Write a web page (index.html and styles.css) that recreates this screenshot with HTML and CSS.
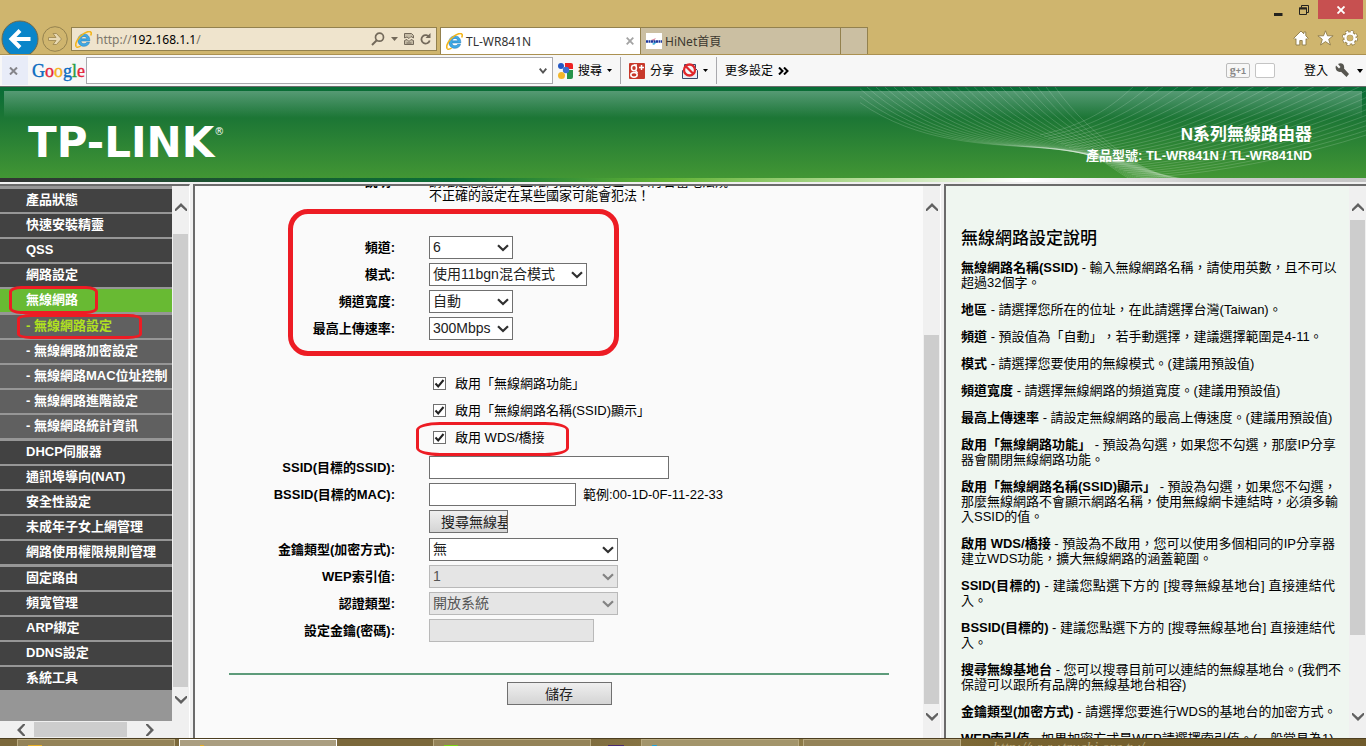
FILE: index.html
```html
<!DOCTYPE html>
<html lang="zh-Hant">
<head>
<meta charset="utf-8">
<title>TL-WR841N</title>
<link rel="stylesheet" href="styles.css">
</head>
<body>
<svg class="defs" aria-hidden="true">
  <symbol id="ie" viewBox="0 0 16 16">
    <path d="M13.9 9.4H5.6c.1 1.6 1.300 2.600 2.900 2.600 1.200 0 2-.5 2.500-1.300h2.700C12.900 13 11 14.400 8.500 14.400 5.200 14.400 2.700 12 2.700 8.600 2.700 5.200 5.200 2.800 8.500 2.800c3.400 0 5.600 2.600 5.400 6.600zM5.700 7.400h5.500C11.100 6 10 5.100 8.500 5.100S5.900 6 5.700 7.400z" fill="#3fa9e4" stroke="#1b78bd" stroke-width=".5"/>
    <path d="M1.300 14.900C-.8 12.500 3 5.400 8.600 2.200c3-1.700 5.800-2 6.500-.9.400.7.200 1.700-.3 2.900" fill="none" stroke="#f3b51b" stroke-width="1.500"/>
    <path d="M1.300 14.900c.9.700 2.500.2 4-.6" fill="none" stroke="#f3b51b" stroke-width="1.300"/>
  </symbol>
  <symbol id="up" viewBox="0 0 12 8"><path d="M0 8V6l6-6 6 6v2l-1 0-5-4.500L1 8z" fill="#606060"/></symbol>
  <symbol id="down" viewBox="0 0 12 8"><path d="M0 0v2l6 6 6-6V0h-1L6 4.500 1 0z" fill="#606060"/></symbol>
  <symbol id="left" viewBox="0 0 8 12"><path d="M8 0H6L0 6l6 6h2v-1L3.500 6 8 1z" fill="#606060"/></symbol>
  <symbol id="right" viewBox="0 0 8 12"><path d="M0 0h2l6 6-6 6H0v-1L4.500 6 0 1z" fill="#606060"/></symbol>
</svg>

<header class="chrome">
  <div class="nav">
    <button class="back" aria-label="上一頁"><svg viewBox="0 0 38 38" width="38" height="38"><circle cx="19" cy="19" r="18" fill="#0985c9" stroke="#6f6a4c"/><path d="M29.500 19H11.500M19 10.500 10.500 19l8.500 8.500" fill="none" stroke="#fff" stroke-width="4"/></svg></button>
    <button class="forward" aria-label="下一頁"><svg viewBox="0 0 26 26" width="26" height="26"><circle cx="13" cy="13" r="12.300" fill="none" stroke="#94824f"/><path d="M6.500 11.500H14l-3-4h3.500l5 5.500-5 5.500H11l3-4H6.500z" fill="#e8d9b3" stroke="#a08b54" stroke-width=".9"/></svg></button>
    <div class="address">
      <svg width="17" height="17"><use href="#ie"/></svg>
      <span class="url">http://<b>192.168.1.1</b>/</span>
      <span class="address-icons">
        <svg width="14" height="14" viewBox="0 0 14 14"><circle cx="8.500" cy="5.200" r="4" fill="none" stroke="#73695a" stroke-width="1.700"/><path d="M5.500 8.500 1 13" stroke="#73695a" stroke-width="2"/></svg>
        <svg width="7" height="4" viewBox="0 0 7 4"><path d="M0 0h7L3.500 4z" fill="#73695a"/></svg>
        <svg width="10" height="12" viewBox="0 0 10 12"><path d="M.5 5V.5h7l2 2V5L7 3.500 5 5.500 3 4zM.5 11.500V7.500L3 6.500l2 2 2-2 2.500 1v4z" fill="#c5bba5" stroke="#73695a"/><path d="M2.500 10h5" stroke="#73695a"/></svg>
        <svg width="11" height="12" viewBox="0 0 11 12"><path d="M9.300 4.300A4.200 4.200 0 1 0 9.700 7.500" fill="none" stroke="#73695a" stroke-width="1.800"/><path d="M10.500 0v5H5.500z" fill="#73695a"/></svg>
      </span>
    </div>
    <div class="tabs">
      <div class="tab tab-active"><svg width="17" height="17"><use href="#ie"/></svg><span>TL-WR841N</span><button class="tab-close" aria-label="關閉"><svg width="8" height="8" viewBox="0 0 8 8"><path d="m.7.700 6.600 6.600M7.300.700.700 7.300" stroke="#a3a3a3" stroke-width="1.800"/></svg></button></div>
      <div class="tab"><svg width="16" height="16" viewBox="0 0 16 16"><path fill="#fff" d="M0 0h16v16H0z"/><path d="m5 7 5-2-2 3z" fill="#d98ba0"/><path d="m6 11 4-3h2l-4 4z" fill="#43b9dd"/><path d="M0 8.500h16" stroke="#1c389e" stroke-width="2.500" stroke-dasharray="2 .5"/></svg><span>HiNet首頁</span></div>
      <button class="tab-new" aria-label="新索引標籤"></button>
    </div>
    <div class="window">
      <div class="controls">
        <svg width="9" height="12" viewBox="0 0 9 12"><path d="M0 10.500h8.500" stroke="#24231f" stroke-width="3"/></svg>
        <svg width="10" height="10" viewBox="0 0 10 10"><path d="M2.500 2.500V.500h7v7h-2M.500 3h7v6.500h-7z" fill="none" stroke="#24231f"/><path d="M0 3.500h8" stroke="#24231f" stroke-width="2"/></svg>
        <button class="close" aria-label="關閉視窗"><svg width="8" height="8" viewBox="0 0 8 8"><path d="m.5.500 7 7M7.500.500l-7 7" stroke="#fff" stroke-width="1.900"/></svg></button>
      </div>
      <div class="tools">
        <svg width="16" height="16" viewBox="0 0 16 16"><path d="M8 1 .8 8.200 2 9.500l1-.8V15h3.800v-4.500h2.400V15H13V8.700l1 .8 1.200-1.300L12.800 5.800V2h-2v1.800z" fill="#fff" stroke="#8d7a48" stroke-width=".9"/></svg>
        <svg width="17" height="16" viewBox="0 0 17 16"><path d="m8.500.800 2 5h5.600l-4.400 3.500 1.700 5.700-4.900-3.400L3.600 15l1.700-5.700L.900 5.800h5.600z" fill="#fff" stroke="#8d7a48" stroke-width=".9"/></svg>
        <svg width="16" height="16" viewBox="0 0 16 16"><g fill="none" stroke="#8d7a48"><circle cx="8" cy="8" r="4.800" stroke-width="3.600"/><circle cx="8" cy="8" r="6.500" stroke-width="3" stroke-dasharray="3 2.105"/></g><g fill="none" stroke="#fff"><circle cx="8" cy="8" r="4.500" stroke-width="2.400"/><circle cx="8" cy="8" r="6.300" stroke-width="2" stroke-dasharray="2.400 2.550"/></g></svg>
      </div>
    </div>
  </div>

  <div class="toolbar">
    <button class="toolbar-close" aria-label="關閉工具列"><svg width="9" height="8" viewBox="0 0 9 8"><path d="m1 .500 7 7M8 .500l-7 7" stroke="#85858a" stroke-width="2"/></svg></button>
    <span class="google"><i class="g-blue">G</i><i class="g-red">o</i><i class="g-yellow">o</i><i class="g-blue">g</i><i class="g-green">l</i><i class="g-red">e</i></span>
    <div class="searchbox"><input type="text" aria-label="搜尋"><svg width="8" height="6" viewBox="0 0 8 6"><path d="m.7.700 3.300 3.800L7.300.700" fill="none" stroke="#555" stroke-width="1.900"/></svg></div>
    <button class="tool"><svg width="16" height="16" viewBox="0 0 16 16"><path d="M8 0h6q2 0 2 2v4H8z" fill="#e22"/><path d="M10 7h6v7q0 2-2 2h-4z" fill="#26934a"/><path d="M6 6h4v10H8z" fill="#f7f7f7"/><circle cx="4" cy="3" r="3" fill="#2357c5"/><circle cx="9" cy="7" r="3.200" fill="#3b6fd2"/><circle cx="4.500" cy="12.500" r="3.500" fill="#f3b72b"/></svg>搜尋<svg width="5" height="3" viewBox="0 0 5 3"><path d="M0 0h5L2.500 3z"/></svg></button>
    <span class="separator"></span>
    <button class="tool"><svg width="16" height="16" viewBox="0 0 16 16"><rect width="16" height="16" rx="1" fill="#c8392b"/><g fill="none" stroke="#fff" stroke-width="1.500"><ellipse cx="5" cy="5" rx="2.500" ry="2.700"/><path d="M8 2H5M6.500 7.500 8.500 10"/><ellipse cx="5" cy="11.800" rx="3.200" ry="2.400"/><path d="M10 4.500h5M12.500 2v5"/></g></svg>分享</button>
    <button class="tool" aria-label="封鎖"><svg width="16" height="16" viewBox="0 0 16 16"><path d="M2.500 1.500h11v4l2 2v8h-15v-8l2-2z" fill="#e7eef7" stroke="#39476a"/><circle cx="7.500" cy="7" r="5.500" fill="#fff" fill-opacity=".5" stroke="#e0272c" stroke-width="2.300"/><path d="m3.500 3 8 8" stroke="#e0272c" stroke-width="2.300"/></svg><svg width="5" height="3" viewBox="0 0 5 3"><path d="M0 0h5L2.500 3z"/></svg></button>
    <span class="separator"></span>
    <button class="tool">更多設定<svg width="11" height="8" viewBox="0 0 11 8"><path d="m1 .500 3.500 3.500L1 7.500M6 .500 9.500 4 6 7.500" fill="none" stroke="#000" stroke-width="2"/></svg></button>
    <div class="account">
      <button class="plus-one">g<small>+1</small></button><span class="bubble"></span>
      <a href="#">登入</a>
      <svg width="15" height="15" viewBox="0 0 15 15"><path d="M1 2.500 4 5.500 5.500 4 3 1c4-2 7 1 6 4.500l5 5.500-2.500 3L6 8.800C2.500 9.800-.5 6.500 1 2.500z" fill="#575650"/></svg>
      <svg width="6" height="4" viewBox="0 0 6 4"><path d="M0 0h6L3 4z"/></svg>
    </div>
  </div>
</header>

<section class="banner">
  <div class="gloss"></div>
  <svg class="waves" id="waves" viewBox="0 0 506 91" aria-hidden="true"></svg>
  <div class="brand">TP-LINK<sup>®</sup></div>
  <div class="product"><h1>N系列無線路由器</h1><p>產品型號: TL-WR841N / TL-WR841ND</p></div>
</section>
<div class="rainbow"></div>

<main class="frames">
  <aside class="frame frame-menu">
    <nav class="menu">
      <a href="#">產品狀態</a>
      <a href="#">快速安裝精靈</a>
      <a href="#">QSS</a>
      <a href="#">網路設定</a>
      <a href="#" class="open">無線網路<span class="mark mark-menu"></span></a>
      <a href="#" class="sub current">- 無線網路設定<span class="mark mark-sub"></span></a>
      <a href="#" class="sub">- 無線網路加密設定</a>
      <a href="#" class="sub">- 無線網路MAC位址控制</a>
      <a href="#" class="sub">- 無線網路進階設定</a>
      <a href="#" class="sub">- 無線網路統計資訊</a>
      <a href="#">DHCP伺服器</a>
      <a href="#">通訊埠導向(NAT)</a>
      <a href="#">安全性設定</a>
      <a href="#">未成年子女上網管理</a>
      <a href="#">網路使用權限規則管理</a>
      <a href="#">固定路由</a>
      <a href="#">頻寬管理</a>
      <a href="#">ARP綁定</a>
      <a href="#">DDNS設定</a>
      <a href="#">系統工具</a>
    </nav>
    <div class="scroll"><svg width="12" height="8"><use href="#up"/></svg><div class="track track-menu"><i></i></div><svg width="12" height="8"><use href="#down"/></svg></div>
    <div class="scroll-x"><svg width="8" height="12"><use href="#left"/></svg><i></i><svg width="8" height="12"><use href="#right"/></svg></div>
  </aside>

  <section class="frame frame-form">
    <form class="form">
      <div class="row notice"><span class="name">說明:</span><p>請確定您選擇了正確的國家或地區，以符合當地法規<br>不正確的設定在某些國家可能會犯法！</p></div>
      <div class="group radio-settings">
        <div class="row"><label for="channel">頻道:</label><select id="channel" class="short"><option>6</option></select></div>
        <div class="row"><label for="mode">模式:</label><select id="mode" class="medium"><option>使用11bgn混合模式</option></select></div>
        <div class="row"><label for="width">頻道寬度:</label><select id="width" class="short"><option>自動</option></select></div>
        <div class="row"><label for="rate">最高上傳速率:</label><select id="rate" class="short"><option>300Mbps</option></select></div>
        <span class="mark mark-radio"></span>
      </div>
      <div class="group options">
        <div class="option"><input type="checkbox" id="radio" checked><label for="radio">啟用「無線網路功能」</label></div>
        <div class="option"><input type="checkbox" id="broadcast" checked><label for="broadcast">啟用「無線網路名稱(SSID)顯示」</label></div>
        <div class="option"><input type="checkbox" id="wds" checked><label for="wds">啟用 WDS/橋接</label><span class="mark mark-wds"></span></div>
      </div>
      <div class="group bridge">
        <div class="row"><label for="ssid">SSID(目標的SSID):</label><input type="text" id="ssid" class="ssid"></div>
        <div class="row"><label for="bssid">BSSID(目標的MAC):</label><div class="with-hint"><input type="text" id="bssid" class="bssid"><span>範例:00-1D-0F-11-22-33</span></div></div>
        <div class="row"><span></span><button type="button" class="button survey">搜尋無線基地台</button></div>
      </div>
      <div class="group security">
        <div class="row"><label for="keytype">金鑰類型(加密方式):</label><select id="keytype" class="long"><option>無</option></select></div>
        <div class="row"><label for="wep">WEP索引值:</label><select id="wep" class="long" disabled><option>1</option></select></div>
        <div class="row"><label for="auth">認證類型:</label><select id="auth" class="long" disabled><option>開放系統</option></select></div>
        <div class="row"><label for="key">設定金鑰(密碼):</label><input type="text" id="key" class="key" disabled></div>
      </div>
      <div class="actions"><button type="button" class="button save">儲存</button></div>
    </form>
    <div class="scroll"><svg width="12" height="8"><use href="#up"/></svg><div class="track track-form"><i></i></div><svg width="12" height="8"><use href="#down"/></svg></div>
  </section>

  <aside class="frame frame-help">
    <article class="help">
      <h2>無線網路設定說明</h2>
      <p><span class="full"><b>無線網路名稱(SSID)</b> - 輸入無線網路名稱，請使用英數，且不可以</span>超過32個字。</p>
      <p><b>地區</b> - 請選擇您所在的位址，在此請選擇台灣(Taiwan)。</p>
      <p><b>頻道</b> - 預設值為「自動」，若手動選擇，建議選擇範圍是4-11。</p>
      <p><b>模式</b> - 請選擇您要使用的無線模式。(建議用預設值)</p>
      <p><b>頻道寬度</b> - 請選擇無線網路的頻道寬度。(建議用預設值)</p>
      <p><b>最高上傳速率</b> - 請設定無線網路的最高上傳速度。(建議用預設值)</p>
      <p><span class="full"><b>啟用「無線網路功能」</b> - 預設為勾選，如果您不勾選，那麼IP分享</span>器會關閉無線網路功能。</p>
      <p><span class="full"><b>啟用「無線網路名稱(SSID)顯示」</b> - 預設為勾選，如果您不勾選，</span><span class="full">那麼無線網路不會顯示網路名稱，使用無線網卡連結時，必須多輸</span>入SSID的值。</p>
      <p><span class="full"><b>啟用 WDS/橋接</b> - 預設為不啟用，您可以使用多個相同的IP分享器</span>建立WDS功能，擴大無線網路的涵蓋範圍。</p>
      <p><span class="full"><b>SSID(目標的)</b> - 建議您點選下方的 [搜尋無線基地台] 直接連結代</span>入。</p>
      <p><span class="full"><b>BSSID(目標的)</b> - 建議您點選下方的 [搜尋無線基地台] 直接連結代</span>入。</p>
      <p><span class="full"><b>搜尋無線基地台</b> - 您可以搜尋目前可以連結的無線基地台。(我們不</span>保證可以跟所有品牌的無線基地台相容)</p>
      <p><b>金鑰類型(加密方式)</b> - 請選擇您要進行WDS的基地台的加密方式。</p>
      <p><b>WEP索引值</b> - 如果加密方式是WEP請選擇索引值。(一般常見為1)</p>
    </article>
    <div class="scroll"><svg width="12" height="8"><use href="#up"/></svg><div class="track track-help"><i></i></div><svg width="12" height="8"><use href="#down"/></svg></div>
  </aside>
</main>

<footer class="taskbar">
  <span class="task task-folder"></span>
  <span class="task task-active"></span>
  <span class="gap"></span>
  <span class="task task-green"></span>
  <span class="tray"></span>
  <span class="task task-blue"></span>
  <span class="task"></span>
  <span class="wallpaper">http://www.tzuchi.org.tw/</span>
</footer>
<script src="waves.js"></script>
</body>
</html>
```
FILE: styles.css
```css
* { box-sizing: border-box; }
html { height: 100%; }
body {
  margin: 0;
  height: 100vh;
  display: flex;
  flex-direction: column;
  overflow: hidden;
  background: #f0f0f0;
  color: #000;
  font: 13px/15px "Liberation Sans", "Noto Sans CJK TC", sans-serif;
  text-spacing-trim: space-all;
}
h1, h2, p { margin: 0; }
svg { display: block; flex: none; }
button, input, select { font: inherit; color: inherit; margin: 0; padding: 0; border-radius: 0; }
button { background: none; border: 0; }
a { color: inherit; text-decoration: none; }
.defs { position: absolute; width: 0; height: 0; }

/* browser frame */
.chrome { flex: none; font-family: "Noto Sans", "Noto Sans CJK TC", sans-serif; font-size: 12px; }
.nav {
  height: 55px;
  display: flex;
  align-items: flex-end;
  background: #cfb56e;
  border-bottom: 1px solid #ab9151;
  overflow: hidden;
}
.back { height: 34px; margin-left: 1px; overflow: hidden; }
.forward { margin: 0 3px 2px; }
.address {
  flex: 0 1 366px;
  height: 24px;
  margin: 0 3px 3px 0;
  padding: 0 5px 0 3px;
  display: flex;
  align-items: center;
  gap: 4px;
  background: #efe4cd;
  border: 1px solid #93814e;
}
.url { color: #7d776a; }
.url b { color: #000; font-weight: normal; }
.address-icons { margin-left: auto; display: flex; align-items: center; gap: 6px; }
.tabs { display: flex; height: 27px; border: 1px solid #93814e; border-bottom: 0; }
.tab {
  width: 200px;
  padding: 0 6px 0 5px;
  display: flex;
  align-items: center;
  gap: 3px;
  background: #cbbfa2;
  border-right: 1px solid #93814e;
  color: #3c382f;
}
.tab-active { background: #fff; color: #333; }
.tab-close { margin-left: auto; }
.tab-new { width: 26px; background: #cbbfa2; }
.window { margin-left: auto; align-self: stretch; display: flex; flex-direction: column; justify-content: space-between; }
.controls { display: flex; align-items: center; gap: 16px; padding-right: 3px; }
.controls svg + svg { margin-right: -7px; }
.close { width: 45px; height: 19px; background: #c75050; display: grid; place-items: center; }
.tools { display: flex; justify-content: flex-end; gap: 8px; padding: 0 8px 8px 0; }

.toolbar {
  height: 32px;
  display: flex;
  align-items: center;
  background: #f7f7f7;
  border-bottom: 1px solid #6b6b6b;
}
.toolbar-close { width: 26px; height: 29px; margin-left: 2px; padding-right: 3px; background: #e8ecf8; display: grid; place-items: center; }
.google { width: 58px; padding-left: 4px; font: 18px/24px "Liberation Serif", serif; }
.google i { font-style: normal; -webkit-text-stroke: 1px currentColor; -webkit-text-stroke-width: thin; }
.g-blue { color: #0b6cc0; }
.g-red { color: #e4263c; }
.g-yellow { color: #f5b21b; }
.g-green { color: #2a9e3f; }
.searchbox { flex: 0 1 467px; height: 27px; display: flex; align-items: center; padding-right: 5px; background: #fff; border: 1px solid #a9a9ad; }
.searchbox input { flex: 1; min-width: 0; height: 100%; border: 0; outline: 0; background: none; }
.tool { display: flex; align-items: center; gap: 5px; padding: 0 4px; white-space: nowrap; }
.separator { width: 1px; height: 27px; margin: 0 4px; background: #a9a9ad; }
.account { margin-left: auto; display: flex; align-items: center; gap: 7px; padding-right: 3px; }
.plus-one { width: 24px; height: 15px; border: 1px solid #bbb; border-radius: 2px; color: #888; font: bold 12px/12px "Liberation Serif", serif; }
.plus-one small { font: bold 9px/12px "Liberation Sans", sans-serif; }
.bubble { width: 20px; height: 15px; margin: 0 22px 0 -2px; border: 1px solid #c4c4c4; border-radius: 2px; background: #fff; }

/* router banner */
.banner {
  flex: none;
  height: 91px;
  position: relative;
  display: flex;
  align-items: center;
  justify-content: space-between;
  padding: 21px 54px 0 28px;
  background: linear-gradient(#086c36, #1c7635 34%, #429634);
  color: #fff;
}
.gloss { position: absolute; inset: 4px 4px auto; height: 27px; background: linear-gradient(rgba(255,255,255,.31), rgba(255,255,255,0)); }
.waves { position: absolute; right: 0; top: 0; width: 506px; height: 91px; fill: none; stroke: #fff; stroke-opacity: .16; }
.brand { position: relative; font: bold 42px/40px "DejaVu Sans", sans-serif; }
.brand sup { font: 10px/10px "DejaVu Sans", sans-serif; vertical-align: 22px; }
.product { position: relative; text-align: right; font-weight: bold; }
.product h1 { font-size: 17px; line-height: 24px; }
.product p { line-height: 17px; }
.rainbow { flex: none; height: 4px; background: linear-gradient(90deg, #333, #155a30 20%, #0b6e37 33%, #62b336 49%, #b5dc98 63%, #fff 75%, #ccc 88%, #c6c6c6); }

/* frameset */
.frames {
  flex: 1;
  min-height: 0;
  padding-top: 2px;
  display: grid;
  grid-template: minmax(0, 1fr) / 190px minmax(0, 1fr) 422px;
  gap: 3px;
}
.frame {
  min-width: 0;
  display: grid;
  grid-template: minmax(0, 1fr) / minmax(0, 1fr) 17px;
  border-top: 2px solid #6b6b6b;
  background: #fafafa;
}
.frame-form, .frame-help { border-left: 2px solid #6b6b6b; }
.frame-form { border-right: 1px solid #fff; overflow: hidden; }
.frame-menu { border-right: 1px solid #fff; grid-template-rows: minmax(0, 1fr) 17px; background: #f0f0f0; }
.frame-help { background: #eff6f0; }

.scroll { display: flex; flex-direction: column; align-items: center; padding: 17px 0; gap: 4px; background: #f0f0f0; }
.track { flex: 1; width: 15px; display: grid; }
.track i, .scroll-x i { background: #cdcdcd; }
.track i { grid-row: 2; }
.track-menu { grid-template-rows: 19fr 453fr 5fr; }
.track-form { grid-template-rows: 120fr 369fr 5fr; }
.track-help { grid-template-rows: 5fr 415fr 74fr; }
.scroll-x { display: flex; align-items: center; padding-left: 17px; gap: 9px; }
.scroll-x i { width: 93px; height: 15px; }
.scroll-x svg + i + svg { margin-left: 10px; }

.menu { padding-top: 3px; background: #969696; display: flex; flex-direction: column; gap: 2px; }
.menu a { position: relative; height: 23px; padding-left: 26px; background: #424242; color: #fff; font-weight: bold; line-height: 21px; white-space: nowrap; }
.menu a:nth-child(5n+6) { margin-top: 1px; }
.menu .sub { background: #606060; }
.menu .open { background: #68ba33; }
.menu .current { color: #b0e020; }

/* hand-drawn highlights */
.mark { position: absolute; border: 3px solid #ed1c24; pointer-events: none; }
.mark-menu { left: 9px; top: -3px; width: 89px; height: 28px; border-radius: 12px / 6px; z-index: 1; }
.mark-sub { left: 17px; top: -1px; width: 125px; height: 25px; border-radius: 14px / 5px; z-index: 1; }
.mark-radio { left: 59px; top: -27px; width: 331px; height: 147px; border-width: 5px; border-radius: 20px; }
.mark-wds { left: 187px; top: -4px; width: 153px; height: 34px; border-radius: 24px / 8px; }

/* wireless form */
.form { width: 660px; margin: -11px auto 0; }
.frame-form > .form { clip-path: inset(11px -40px 0); }
.row { display: grid; grid-template-columns: 166px 1fr; column-gap: 34px; align-items: center; justify-items: start; }
.row > label, .name { justify-self: end; font-weight: bold; white-space: nowrap; }
.notice { align-items: start; line-height: 14px; }
.group { position: relative; display: grid; grid-auto-rows: 23px; row-gap: 4px; }
.radio-settings { margin-top: 33px; }
.options { margin-top: 32px; }
.bridge { margin-top: 7px; }
.security { margin-top: 5px; }
.option { position: relative; display: flex; align-items: center; gap: 9px; padding-left: 204px; }
.form input[type="checkbox"] {
  appearance: none;
  width: 13px;
  height: 13px;
  border: 1px solid #707070;
  background: #fff url("data:image/svg+xml,%3Csvg xmlns='http://www.w3.org/2000/svg' viewBox='0 0 11 11'%3E%3Cpath d='M1.500 5.500 4.200 8.500 9.500 2' fill='none' stroke='%23222' stroke-width='2'/%3E%3C/svg%3E") center / 11px no-repeat;
}
.form input[type="text"], .form select { height: 23px; border: 1px solid #707070; background-color: #fff; }
.form select {
  appearance: none;
  padding: 0 24px 0 3px;
  color: #222;
  font-size: 14px;
  background-image: url("data:image/svg+xml,%3Csvg xmlns='http://www.w3.org/2000/svg' viewBox='0 0 12 8'%3E%3Cpath d='M1 1.200 6 6 11 1.200' fill='none' stroke='%23303030' stroke-width='2.200'/%3E%3C/svg%3E");
  background-repeat: no-repeat;
  background-position: right 3px center;
  background-size: 12px 8px;
}
.form .short { width: 84px; padding-right: 0; }
.form .medium { width: 158px; }
.form .long { width: 189px; }
.form .ssid { width: 240px; }
.form .bssid { width: 147px; }
.form .key { width: 165px; }
.form select:disabled, .form input[type="text"]:disabled { background-color: #e5e5e5; border-color: #b9b9b9; color: #555; opacity: 1; }
.form select:disabled { background-image: url("data:image/svg+xml,%3Csvg xmlns='http://www.w3.org/2000/svg' viewBox='0 0 12 8'%3E%3Cpath d='M1 1.200 6 6 11 1.200' fill='none' stroke='%23838383' stroke-width='2.200'/%3E%3C/svg%3E"); }
.with-hint { display: flex; align-items: center; gap: 7px; white-space: nowrap; }
.button { height: 23px; border: 1px solid #707070; background: linear-gradient(#efefef, #d4d4d4); font-size: 14px; line-height: 20px; color: #222; }
.survey { width: 79px; padding-left: 11px; text-align: left; white-space: nowrap; overflow: hidden; }
.actions { margin-top: 31px; padding-top: 7px; border-top: 2px solid #5d9b7a; text-align: center; }
.save { width: 105px; }

/* help */
.help { padding: 41px 14px 0 15px; overflow: hidden; white-space: nowrap; }
.help h2 { margin-bottom: 9px; font-size: 17px; line-height: 24px; font-weight: 500; }
.help p { margin-bottom: 12px; }
.full { display: block; text-align-last: justify; }

/* taskbar */
.taskbar { flex: none; height: 8px; display: flex; gap: 4px; padding-left: 17px; overflow: hidden; background: linear-gradient(90deg, #7b683b, #7b683b 40%, #92804c 55%, #77622f 75%, #705b2c); border-top: 1px solid #4c3e20; }
.task { flex: none; width: 158px; border: 1px solid #b9aa80; border-bottom: 0; background: #948358; }
.task-active { border-color: #fff; background: linear-gradient(#e8ae24, #e8ae24) 20px 5px / 4px 2px no-repeat #aa9e80; }
.gap { width: 88px; }
.tray { width: 42px; background: linear-gradient(#4b2a70, #4b2a70) 13px 6px / 16px 2px no-repeat; }
.task-folder { background: linear-gradient(#e8ae24, #e8ae24) 10px 5px / 14px 2px no-repeat #948358; }
.task-green { background: linear-gradient(#7bd411, #7bd411) 10px 5px / 14px 2px no-repeat #948358; }
.task-blue { background: linear-gradient(#21a5dc, #21a5dc) 10px 5px / 5px 2px no-repeat #a3956b; }
.wallpaper { padding-left: 28px; color: #b7a476; font: italic 15px/17px "Liberation Serif", serif; white-space: nowrap; }
```
FILE: waves.js
```js
// Draws the families of thin curves on the right side of the banner.
const svg = document.getElementById('waves');

function curve(d) {
  const path = document.createElementNS('http://www.w3.org/2000/svg', 'path');
  path.setAttribute('d', d);
  svg.appendChild(path);
}

const STEPS = 24;
for (let i = 0; i <= STEPS; i++) {
  const t = i / STEPS;
  const mix = (a, b) => a + (b - a) * t;

  // upper left down to the foot of the banner
  curve(`M${mix(-20, 195)} 0 C${mix(35, 215)} ${mix(48, 28)} ${mix(95, 235)} ${mix(56, 46)} ${mix(170, 262)} ${mix(60, 66)} S${mix(240, 300)} ${mix(76, 88)} ${mix(272, 330)} 93`);

  // upper right down towards the middle
  curve(`M${mix(275, 640)} -2 C${mix(250, 520)} ${mix(22, 50)} ${mix(225, 400)} ${mix(38, 84)} ${mix(180, 280)} ${mix(48, 91)}`);
}
```
